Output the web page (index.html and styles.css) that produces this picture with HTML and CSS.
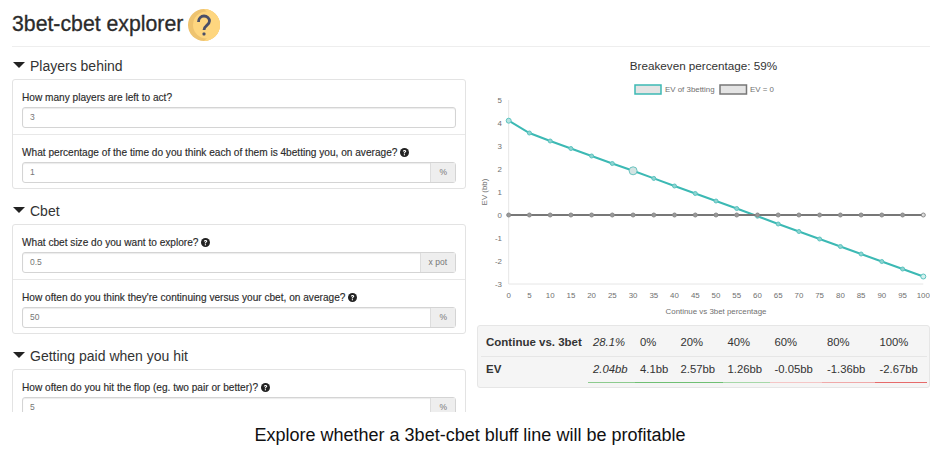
FILE: index.html
```html
<!DOCTYPE html>
<html lang="en">

<head>
    <meta charset="UTF-8" />
    <meta name="viewport" content="width=device-width, initial-scale=1.0" />
    <title>3bet-cbet explorer</title>
    <link rel="stylesheet" href="styles.css">
</head>

<body>
    <svg class="defs" width="0" height="0">
        <symbol id="help" viewBox="0 0 24 24">
            <circle cx="12" cy="12" r="12" fill="#222" />
            <path d="M7.6 9.2c.2-2.6 2.1-4 4.6-4 2.5 0 4.4 1.500 4.4 3.700 0 1.900-1.200 2.700-2.300 3.400-.9.600-1.300 1-1.300 2v.5h-3v-.8c0-1.700.8-2.500 1.900-3.200.9-.6 1.500-1 1.500-1.800 0-.8-.6-1.300-1.400-1.300-.9 0-1.400.6-1.500 1.500z" fill="#fff" />
            <rect x="10.2" y="16.5" width="3.2" height="3" fill="#fff" />
        </symbol>
    </svg>

    <div class="page">
        <header class="title-bar">
            <h1>3bet-cbet explorer</h1>
            <svg class="title-icon" width="32" height="32" viewBox="0 0 32 32">
                <circle cx="16" cy="16" r="16" fill="#eec36f" />
                <circle cx="18.5" cy="16" r="13.5" fill="#fed67f" />
                <path d="M16 0a16 16 0 0 1 0 32a20 20 0 0 0 0-32z" fill="#fed67f" />
                <path d="M10.5 13c0-3.500 2.500-6 5.500-6s5.500 2.300 5.500 5c0 4.300-5.500 4.500-5.500 9" fill="none" stroke="#4a4f68" stroke-width="2.8" />
                <rect x="14.5" y="23.5" width="3" height="3" rx="1" fill="#4a4f68" />
            </svg>
        </header>

        <div class="columns">
            <section class="inputs">
                <h2><span class="caret"></span>Players behind</h2>
                <div class="panel">
                    <div class="field">
                        <label>How many players are left to act?</label>
                        <div class="input-group"><span class="value">3</span></div>
                    </div>
                    <div class="field">
                        <label>What percentage of the time do you think each of them is 4betting you, on average? <svg class="help"><use href="#help" /></svg></label>
                        <div class="input-group"><span class="value">1</span><span class="addon">%</span></div>
                    </div>
                </div>

                <h2><span class="caret"></span>Cbet</h2>
                <div class="panel">
                    <div class="field">
                        <label>What cbet size do you want to explore? <svg class="help"><use href="#help" /></svg></label>
                        <div class="input-group"><span class="value">0.5</span><span class="addon">x pot</span></div>
                    </div>
                    <div class="field">
                        <label>How often do you think they're continuing versus your cbet, on average? <svg class="help"><use href="#help" /></svg></label>
                        <div class="input-group"><span class="value">50</span><span class="addon">%</span></div>
                    </div>
                </div>

                <h2><span class="caret"></span>Getting paid when you hit</h2>
                <div class="panel">
                    <div class="field">
                        <label>How often do you hit the flop (eg. two pair or better)? <svg class="help"><use href="#help" /></svg></label>
                        <div class="input-group"><span class="value">5</span><span class="addon">%</span></div>
                    </div>
                </div>
            </section>

            <section class="results">
                <div class="breakeven">Breakeven percentage: 59%</div>
                <svg class="chart" width="453" height="240" viewBox="477 80 453 240">
                    <g class="legend">
                        <rect x="635" y="85" width="26" height="9" fill="#e4e4e4" stroke="#3cb9b4" stroke-width="1.5" />
                        <text x="665" y="92">EV of 3betting</text>
                        <rect x="720" y="85" width="26.5" height="9" fill="#e4e4e4" stroke="#777" stroke-width="1.5" />
                        <text x="750" y="92">EV = 0</text>
                    </g>

                    <path d="M508.7 100V284H923.3" fill="none" stroke="#e6e6e6" />

                    <g class="ticks" text-anchor="end">
                        <text x="502" y="103">5</text>
                        <text x="502" y="126">4</text>
                        <text x="502" y="149">3</text>
                        <text x="502" y="172">2</text>
                        <text x="502" y="195">1</text>
                        <text x="502" y="218">0</text>
                        <text x="502" y="241">-1</text>
                        <text x="502" y="264">-2</text>
                        <text x="502" y="287">-3</text>
                    </g>

                    <g class="ticks" text-anchor="middle">
                        <text x="508.7" y="298">0</text>
                        <text x="529.4" y="298">5</text>
                        <text x="550.2" y="298">10</text>
                        <text x="570.9" y="298">15</text>
                        <text x="591.6" y="298">20</text>
                        <text x="612.3" y="298">25</text>
                        <text x="633.1" y="298">30</text>
                        <text x="653.8" y="298">35</text>
                        <text x="674.5" y="298">40</text>
                        <text x="695.3" y="298">45</text>
                        <text x="716" y="298">50</text>
                        <text x="736.7" y="298">55</text>
                        <text x="757.5" y="298">60</text>
                        <text x="778.2" y="298">65</text>
                        <text x="798.9" y="298">70</text>
                        <text x="819.6" y="298">75</text>
                        <text x="840.4" y="298">80</text>
                        <text x="861.1" y="298">85</text>
                        <text x="881.8" y="298">90</text>
                        <text x="902.6" y="298">95</text>
                        <text x="923.3" y="298">100</text>
                    </g>

                    <text class="ticks" x="716" y="314" text-anchor="middle">Continue vs 3bet percentage</text>
                    <text class="ticks" transform="translate(486.500 192) rotate(-90)" text-anchor="middle">EV (bb)</text>

                    <polyline fill="none" stroke="#3cb9b4" stroke-width="2" points="508.7,120.7 529.4,133 550.2,141 570.9,148.5 591.6,156 612.3,163.5 633.1,170.8 653.8,178.4 674.5,186 695.3,193.5 716,201 736.7,208.5 757.5,216.2 778.2,224 798.9,231.5 819.6,239 840.4,246.5 861.1,254 881.8,261.5 902.6,269 923.3,276.5" />
                    <g fill="#8ed4d1" stroke="#5cc4c0" stroke-width="1">
                        <circle cx="508.7" cy="120.7" r="2.5" fill="#b5e3e1" />
                        <circle cx="529.4" cy="133" r="2" />
                        <circle cx="550.2" cy="141" r="2" />
                        <circle cx="570.9" cy="148.5" r="2" />
                        <circle cx="591.6" cy="156" r="2" />
                        <circle cx="612.3" cy="163.5" r="2" />
                        <circle cx="653.8" cy="178.4" r="2" />
                        <circle cx="674.5" cy="186" r="2" />
                        <circle cx="695.3" cy="193.5" r="2" />
                        <circle cx="716" cy="201" r="2" />
                        <circle cx="736.7" cy="208.5" r="2" />
                        <circle cx="757.5" cy="216.2" r="2" />
                        <circle cx="778.2" cy="224" r="2" />
                        <circle cx="798.9" cy="231.5" r="2" />
                        <circle cx="819.6" cy="239" r="2" />
                        <circle cx="840.4" cy="246.5" r="2" />
                        <circle cx="861.1" cy="254" r="2" />
                        <circle cx="881.8" cy="261.5" r="2" />
                        <circle cx="902.6" cy="269" r="2" />
                        <circle cx="923.3" cy="276.5" r="2.5" fill="#d5f0ee" />
                    </g>
                    <circle cx="633.1" cy="170.8" r="4" fill="#d3e4e3" stroke="#6bc4c0" />

                    <line x1="508.7" y1="215" x2="923.3" y2="215" stroke="#777" stroke-width="2" />
                    <g fill="#999" stroke="#8a8a8a" stroke-width="1">
                        <circle cx="508.7" cy="215" r="2" />
                        <circle cx="529.4" cy="215" r="2" />
                        <circle cx="550.2" cy="215" r="2" />
                        <circle cx="570.9" cy="215" r="2" />
                        <circle cx="591.6" cy="215" r="2" />
                        <circle cx="612.3" cy="215" r="2" />
                        <circle cx="633.1" cy="215" r="2" />
                        <circle cx="653.8" cy="215" r="2" />
                        <circle cx="674.5" cy="215" r="2" />
                        <circle cx="695.3" cy="215" r="2" />
                        <circle cx="716" cy="215" r="2" />
                        <circle cx="736.7" cy="215" r="2" />
                        <circle cx="757.5" cy="215" r="2" />
                        <circle cx="778.2" cy="215" r="2" />
                        <circle cx="798.9" cy="215" r="2" />
                        <circle cx="819.6" cy="215" r="2" />
                        <circle cx="840.4" cy="215" r="2" />
                        <circle cx="861.1" cy="215" r="2" />
                        <circle cx="881.8" cy="215" r="2" />
                        <circle cx="902.6" cy="215" r="2" />
                        <circle cx="923.3" cy="215" r="2" fill="#ddd" />
                    </g>
                </svg>

                <div class="ev-box">
                    <table class="ev-table">
                        <tr>
                            <th>Continue vs. 3bet</th>
                            <td><em>28.1%</em></td>
                            <td>0%</td>
                            <td>20%</td>
                            <td>40%</td>
                            <td>60%</td>
                            <td>80%</td>
                            <td>100%</td>
                        </tr>
                        <tr>
                            <th>EV</th>
                            <td class="good-mid"><em>2.04bb</em></td>
                            <td class="good-strong">4.1bb</td>
                            <td class="good-strong">2.57bb</td>
                            <td class="good-light">1.26bb</td>
                            <td class="bad-light">-0.05bb</td>
                            <td class="bad-mid">-1.36bb</td>
                            <td class="bad-strong">-2.67bb</td>
                        </tr>
                    </table>
                </div>
            </section>
        </div>
    </div>

    <p class="caption">Explore whether a 3bet-cbet bluff line will be profitable</p>
</body>

</html>
```

FILE: styles.css
```css
body {
    margin: 0;
    height: 459px;
    overflow: hidden;
    background-color: white;
    color: #333;
    font-family: "Liberation Sans", Arial, sans-serif;
}

.defs {
    display: block;
    height: 0;
}

.page {
    height: 412px;
    overflow: hidden;
    padding: 0 15px 0 12px;
    box-sizing: border-box;
}

.title-bar {
    display: flex;
    align-items: center;
    gap: 5px;
    height: 47px;
    padding-top: 3px;
    box-sizing: border-box;
    border-bottom: 1px solid #eee;
}

.title-bar h1 {
    margin: 0;
    font-size: 21.25px;
    font-weight: normal;
    color: #2b2b2b;
    -webkit-text-stroke: 0.3px #2b2b2b;
}

.title-icon {
    display: block;
}

.columns {
    display: flex;
    gap: 11px;
}

.inputs {
    width: 454px;
    flex: none;
}

.inputs h2 {
    display: flex;
    align-items: center;
    gap: 5px;
    margin: 0;
    height: 32px;
    padding: 6px 0 0 1px;
    box-sizing: border-box;
    font-size: 14px;
    font-weight: normal;
}

.caret {
    width: 0;
    height: 0;
    margin-top: -3px;
    border-left: 6px solid transparent;
    border-right: 6px solid transparent;
    border-top: 6px solid #222;
}

.panel {
    border: 1px solid #e3e3e3;
    border-radius: 3px;
    margin-bottom: 3px;
}

.field {
    padding: 10px 9px 6px;
    border-bottom: 1px solid #e8e8e8;
}

.field:last-child {
    padding-bottom: 5px;
    border-bottom: none;
}

.field label {
    display: flex;
    align-items: center;
    gap: 3px;
    height: 14px;
    margin-bottom: 3px;
    font-size: 10.12px;
    color: #2b2b2b;
    -webkit-text-stroke: 0.15px #2b2b2b;
}

.help {
    width: 9px;
    height: 9px;
}

.input-group {
    display: flex;
    height: 21px;
    box-sizing: border-box;
    border: 1px solid #d4d4d4;
    border-radius: 3px;
    box-shadow: inset 0 1px 1px rgba(0, 0, 0, 0.08);
    font-size: 8.5px;
    color: #777;
}

.value {
    flex: 1;
    padding: 0 7px;
    line-height: 19px;
}

.addon {
    padding: 0 8px;
    line-height: 19px;
    background-color: #eee;
    border-left: 1px solid #ddd;
}

.results {
    width: 453px;
    flex: none;
}

.breakeven {
    height: 33px;
    padding-top: 11px;
    box-sizing: border-box;
    text-align: center;
    font-size: 11.7px;
    line-height: 15px;
}

.chart {
    display: block;
}

.chart text {
    font-size: 7.9px;
    fill: #707070;
}

.ev-box {
    margin-top: 5px;
    padding: 3px 3px 4px;
    height: 63px;
    box-sizing: border-box;
    background-color: #f5f5f5;
    border: 1px solid #e6e6e6;
    border-radius: 3px;
}

.ev-table {
    width: 446px;
    table-layout: fixed;
    border-collapse: collapse;
    font-size: 11.3px;
}

.ev-table th {
    width: 107px;
    height: 26px;
    padding: 0 0 0 5px;
    box-sizing: border-box;
    text-align: left;
    font-size: 11.5px;
    white-space: nowrap;
}

.ev-table tr:first-child th {
    height: 27px;
}

.ev-table td {
    padding: 0 0 0 5px;
    box-sizing: border-box;
    white-space: nowrap;
}

.ev-table td:nth-child(2),
.ev-table td:nth-child(4),
.ev-table td:nth-child(5) {
    width: 47px;
}

.ev-table td:nth-child(3) {
    width: 40.5px;
}

.ev-table td:nth-child(6),
.ev-table td:nth-child(7),
.ev-table td:nth-child(8) {
    width: 52.5px;
}

.ev-table tr:first-child th,
.ev-table tr:first-child td {
    border-bottom: 1px solid #e6e6e6;
}

.good-strong {
    border-bottom: 1px solid #6fbf73;
}

.good-mid {
    border-bottom: 1px solid #8ccb8e;
}

.good-light {
    border-bottom: 1px solid #a6d8a8;
}

.bad-light {
    border-bottom: 1px solid #f5c6c6;
}

.bad-mid {
    border-bottom: 1px solid #f0a9a9;
}

.bad-strong {
    border-bottom: 1px solid #e66a6a;
}

.caption {
    margin: 0;
    height: 47px;
    padding: 13px 5px 0 0;
    box-sizing: border-box;
    text-align: center;
    font-size: 18px;
    line-height: 20px;
    color: #111;
}
```
